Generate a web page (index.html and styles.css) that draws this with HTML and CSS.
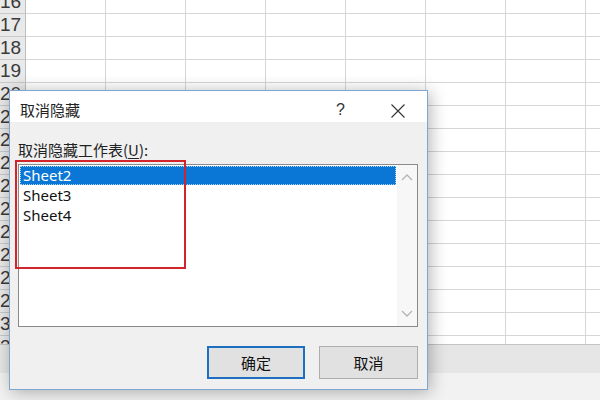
FILE: index.html
```html
<!DOCTYPE html>
<html lang="zh">
<head>
<meta charset="utf-8">
<title>取消隐藏</title>
<link rel="stylesheet" href="styles.css">
</head>
<body>
<div class="sheet">
  <div class="rows">
    <div class="row"><div class="rh">16</div><div class="c"></div><div class="c"></div><div class="c"></div><div class="c"></div><div class="c"></div><div class="c"></div><div class="c"></div><div class="c"></div></div>
    <div class="row"><div class="rh">17</div><div class="c"></div><div class="c"></div><div class="c"></div><div class="c"></div><div class="c"></div><div class="c"></div><div class="c"></div><div class="c"></div></div>
    <div class="row"><div class="rh">18</div><div class="c"></div><div class="c"></div><div class="c"></div><div class="c"></div><div class="c"></div><div class="c"></div><div class="c"></div><div class="c"></div></div>
    <div class="row"><div class="rh">19</div><div class="c"></div><div class="c"></div><div class="c"></div><div class="c"></div><div class="c"></div><div class="c"></div><div class="c"></div><div class="c"></div></div>
    <div class="row"><div class="rh">20</div><div class="c"></div><div class="c"></div><div class="c"></div><div class="c"></div><div class="c"></div><div class="c"></div><div class="c"></div><div class="c"></div></div>
    <div class="row"><div class="rh">21</div><div class="c"></div><div class="c"></div><div class="c"></div><div class="c"></div><div class="c"></div><div class="c"></div><div class="c"></div><div class="c"></div></div>
    <div class="row"><div class="rh">22</div><div class="c"></div><div class="c"></div><div class="c"></div><div class="c"></div><div class="c"></div><div class="c"></div><div class="c"></div><div class="c"></div></div>
    <div class="row"><div class="rh">23</div><div class="c"></div><div class="c"></div><div class="c"></div><div class="c"></div><div class="c"></div><div class="c"></div><div class="c"></div><div class="c"></div></div>
    <div class="row"><div class="rh">24</div><div class="c"></div><div class="c"></div><div class="c"></div><div class="c"></div><div class="c"></div><div class="c"></div><div class="c"></div><div class="c"></div></div>
    <div class="row"><div class="rh">25</div><div class="c"></div><div class="c"></div><div class="c"></div><div class="c"></div><div class="c"></div><div class="c"></div><div class="c"></div><div class="c"></div></div>
    <div class="row"><div class="rh">26</div><div class="c"></div><div class="c"></div><div class="c"></div><div class="c"></div><div class="c"></div><div class="c"></div><div class="c"></div><div class="c"></div></div>
    <div class="row"><div class="rh">27</div><div class="c"></div><div class="c"></div><div class="c"></div><div class="c"></div><div class="c"></div><div class="c"></div><div class="c"></div><div class="c"></div></div>
    <div class="row"><div class="rh">28</div><div class="c"></div><div class="c"></div><div class="c"></div><div class="c"></div><div class="c"></div><div class="c"></div><div class="c"></div><div class="c"></div></div>
    <div class="row"><div class="rh">29</div><div class="c"></div><div class="c"></div><div class="c"></div><div class="c"></div><div class="c"></div><div class="c"></div><div class="c"></div><div class="c"></div></div>
    <div class="row"><div class="rh">30</div><div class="c"></div><div class="c"></div><div class="c"></div><div class="c"></div><div class="c"></div><div class="c"></div><div class="c"></div><div class="c"></div></div>
    <div class="row"><div class="rh">31</div><div class="c"></div><div class="c"></div><div class="c"></div><div class="c"></div><div class="c"></div><div class="c"></div><div class="c"></div><div class="c"></div></div>
  </div>
</div>
<div class="tabbar"></div>
<div class="statusbar"></div>

<div class="dialog">
  <div class="titlebar">
    <span class="title">取消隐藏</span>
    <span class="help">?</span>
    <svg class="close" width="14" height="14" viewBox="0 0 14 14"><path d="M0.5 0.5 L13.5 13.5 M13.5 0.5 L0.5 13.5" stroke="#333" stroke-width="1.1" fill="none"/></svg>
  </div>
  <div class="body">
    <div class="label">取消隐藏工作表(<u>U</u>):</div>
    <div class="listbox">
      <div class="items">
        <div class="item selected">Sheet2</div>
        <div class="item">Sheet3</div>
        <div class="item">Sheet4</div>
      </div>
      <div class="scrollbar">
        <svg width="12" height="8" viewBox="0 0 12 8"><path d="M1 7 L6 2 L11 7" stroke="#b4b4b4" stroke-width="1.3" fill="none"/></svg>
        <svg width="12" height="8" viewBox="0 0 12 8"><path d="M1 1 L6 6 L11 1" stroke="#b4b4b4" stroke-width="1.3" fill="none"/></svg>
      </div>
    </div>
    <div class="buttons">
      <div class="btn default">确定</div>
      <div class="btn">取消</div>
    </div>
  </div>
</div>
<div class="highlight-box"></div>
</body>
</html>
```

FILE: styles.css
```css
html, body {
  margin: 0;
  padding: 0;
  width: 600px;
  height: 400px;
  overflow: hidden;
  background: #ffffff;
  font-family: "Noto Sans", "Noto Sans CJK SC", sans-serif;
}

.sheet {
  height: 344px;
  overflow: hidden;
  background: #ffffff;
}

.rows {
  margin-top: -9px;
}

.row {
  display: flex;
  height: 23px;
  box-sizing: border-box;
}

.rh {
  width: 26px;
  flex: none;
  box-sizing: border-box;
  background: #e9e9e9;
  border-right: 1px solid #bdbdbd;
  border-bottom: 1px solid #c9c9c9;
  font-family: "Liberation Sans Narrow", "Liberation Sans", sans-serif;
  font-size: 19px;
  line-height: 22px;
  color: #3a3a3a;
  white-space: nowrap;
}

.c {
  width: 80px;
  flex: none;
  box-sizing: border-box;
  border-right: 1px solid #d6d6d6;
  border-bottom: 1px solid #d6d6d6;
}

.tabbar {
  height: 29px;
  box-sizing: border-box;
  border-top: 1px solid #c4c4c4;
  background: #e6e6e6;
}

.statusbar {
  height: 27px;
  background: #f2f2f2;
}

.dialog {
  position: absolute;
  left: 9px;
  top: 90px;
  width: 419px;
  height: 300px;
  box-sizing: border-box;
  border: 1px solid #7fa6cf;
  background: #f0f0f0;
  box-shadow: 2px 2px 16px rgba(0, 0, 0, 0.3);
  display: flex;
  flex-direction: column;
}

.titlebar {
  height: 31px;
  flex: none;
  background: #ffffff;
  display: flex;
  align-items: flex-start;
  padding-top: 11px;
  box-sizing: border-box;
  position: relative;
}

.title {
  margin-left: 10px;
  font-family: "Noto Sans CJK SC", sans-serif;
  font-size: 15px;
  line-height: 16px;
  color: #222;
}

.help {
  position: absolute;
  left: 326px;
  top: 10px;
  font-family: "Liberation Sans", sans-serif;
  font-size: 16px;
  line-height: 18px;
  color: #333;
}

.close {
  position: absolute;
  left: 381px;
  top: 13px;
}

.body {
  flex: 1;
  display: flex;
  flex-direction: column;
  padding: 18px 9px 10px 8px;
  box-sizing: border-box;
}

.label {
  font-family: "Noto Sans CJK SC", sans-serif;
  font-size: 15px;
  line-height: 20px;
  color: #222;
  white-space: nowrap;
}

.label u {
  text-decoration-thickness: 1px;
  text-underline-offset: 2px;
}

.listbox {
  margin-top: 4px;
  width: 400px;
  height: 163px;
  box-sizing: border-box;
  border: 1px solid #8a8a8a;
  background: #ffffff;
  display: flex;
}

.items {
  flex: 1;
  padding: 1px;
}

.item {
  height: 20px;
  line-height: 19px;
  padding-left: 3px;
  font-family: "Noto Sans", sans-serif;
  font-size: 15px;
  color: #111;
}

.item.selected {
  background: #0a76d6;
  color: #ffffff;
  outline: 1px dotted #a9d2f5;
  outline-offset: -1px;
  height: 19px;
  margin-bottom: 1px;
}

.scrollbar {
  width: 20px;
  flex: none;
  background: #f7f7f7;
  display: flex;
  flex-direction: column;
  justify-content: space-between;
  align-items: center;
  padding: 8px 0 8px;
  box-sizing: border-box;
}

.buttons {
  margin-top: 19px;
  display: flex;
  justify-content: flex-end;
  gap: 14px;
}

.btn {
  width: 99px;
  height: 33px;
  box-sizing: border-box;
  border: 1px solid #adadad;
  background: #e1e1e1;
  font-family: "Noto Sans CJK SC", sans-serif;
  font-size: 15px;
  color: #111;
  display: flex;
  align-items: center;
  justify-content: center;
}

.btn.default {
  width: 98px;
  border: 2px solid #1f6fc0;
}

.highlight-box {
  position: absolute;
  left: 15px;
  top: 160px;
  width: 171px;
  height: 109px;
  box-sizing: border-box;
  border: 2px solid #d0262b;
}
```
